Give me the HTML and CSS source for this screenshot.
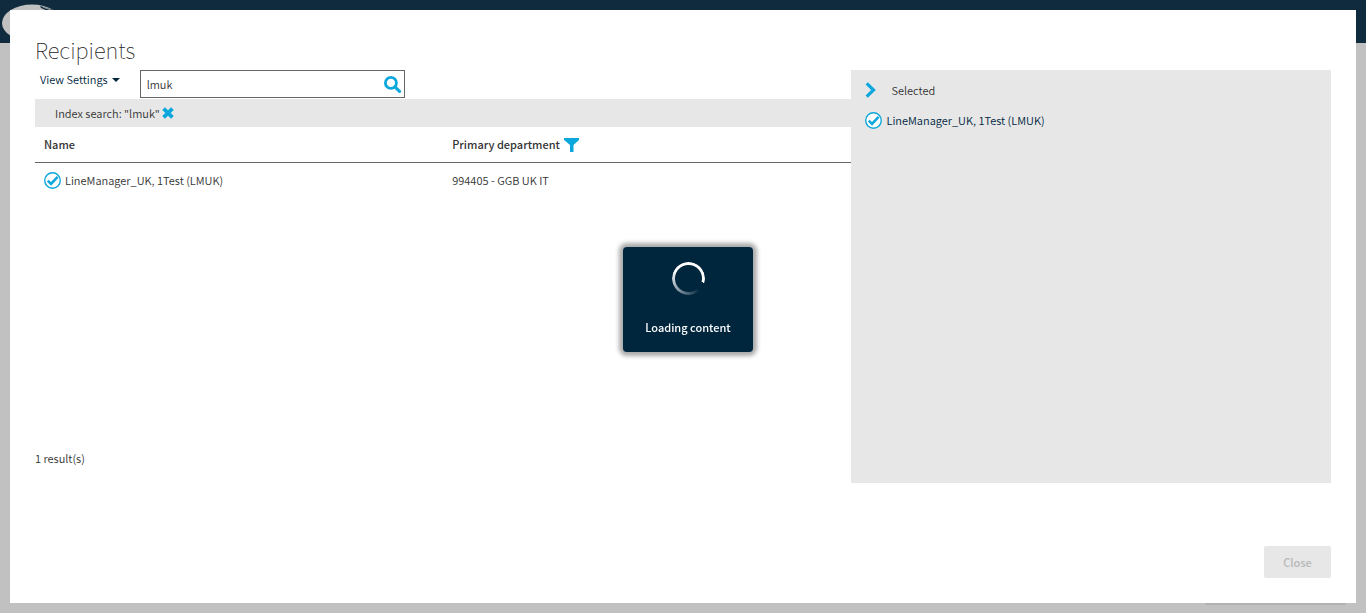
FILE: index.html
```html
<!DOCTYPE html>
<html lang="en">
<head>
<meta charset="utf-8">
<meta name="viewport" content="width=device-width, initial-scale=1">
<title>Recipients</title>
<link rel="stylesheet" href="styles.css">
</head>
<body>
<svg class="defs" aria-hidden="true">
  <symbol id="check" viewBox="0 0 16 16">
    <circle cx="8" cy="8" r="7.3" fill="#fff" stroke="#0ca7dc" stroke-width="1.3"/>
    <path d="M3.6 8.2 6.6 11.2 12.8 4.6" fill="none" stroke="#0ca7dc" stroke-width="2.4"/>
  </symbol>
</svg>
<div class="page">
  <header class="page-header">
    <svg class="logo" viewBox="0 0 60 38" aria-hidden="true">
      <ellipse cx="32" cy="19" rx="30" ry="18.500" fill="#c1c1c1"/>
      <path d="M40 2 60 8V12L41 4Z" fill="#0f2b3d"/>
      <path d="M43 3 58 9" stroke="#8c99a1" stroke-width="1"/>
    </svg>
  </header>
  <div class="page-bottom"></div>
</div>

<main class="dialog" role="dialog" aria-labelledby="title">
  <h1 class="title" id="title">Recipients</h1>
  <div class="content">
    <section class="results">
      <div class="toolbar">
        <button class="view-settings" type="button">View Settings
          <svg class="caret" viewBox="0 0 8 4" aria-hidden="true"><path d="M0 0H8L4 4Z" fill="currentColor"/></svg>
        </button>
        <form class="search">
          <input class="search-input" type="text" value="lmuk" aria-label="Search">
          <button class="icon-button" type="button" aria-label="Run search">
            <svg class="icon-search" viewBox="0 0 16 16" aria-hidden="true"><circle cx="6.500" cy="6.500" r="5.200" fill="none" stroke="#0ca7dc" stroke-width="2.600"/><path d="M10.300 10.300 14.600 14.400" stroke="#0ca7dc" stroke-width="3" stroke-linecap="round"/></svg>
          </button>
        </form>
      </div>
      <div class="filter-bar">
        <span>Index search: "lmuk"</span>
        <button class="icon-button" type="button" aria-label="Remove filter">
          <svg class="icon-remove" viewBox="0 0 12 12" aria-hidden="true"><path d="M1.600 1.600 10.400 10.400M10.400 1.600 1.600 10.400" stroke="#0ca7dc" stroke-width="3.800"/></svg>
        </button>
      </div>
      <table class="grid">
        <thead>
          <tr>
            <th scope="col">Name</th>
            <th scope="col">
              <div class="cell">Primary department
                <button class="icon-button" type="button" aria-label="Filter by primary department">
                  <svg class="icon-funnel" viewBox="0 0 15 14" aria-hidden="true"><path d="M0 0H15V2L9.500 7V14H6V7L0 2Z" fill="#0ca7dc"/></svg>
                </button>
              </div>
            </th>
          </tr>
        </thead>
        <tbody>
          <tr>
            <td><div class="cell"><svg class="icon-check" aria-hidden="true"><use href="#check"/></svg>LineManager_UK, 1Test (LMUK)</div></td>
            <td>994405 - GGB UK IT</td>
          </tr>
        </tbody>
      </table>
      <p class="count">1 result(s)</p>
    </section>
    <aside class="selected">
      <button class="selected-head" type="button">
        <svg class="icon-chevron" viewBox="0 0 10 16" aria-hidden="true"><path d="M1.200 1.400 8 8 1.200 14.600" fill="none" stroke="#0ca7dc" stroke-width="3.200"/></svg>
        Selected
      </button>
      <a class="selected-item" href="#"><svg class="icon-check" aria-hidden="true"><use href="#check"/></svg>LineManager_UK, 1Test (LMUK)</a>
    </aside>
  </div>
  <footer class="actions">
    <button class="close" type="button" disabled>Close</button>
  </footer>
</main>

<div class="loading-layer">
  <div class="loading" role="status">
    <div class="spinner"></div>
    <span>Loading content</span>
  </div>
</div>
</body>
</html>
```

FILE: styles.css
```css
* {
  box-sizing: border-box;
}

body {
  margin: 0;
  font-family: "Source Sans Pro", "Noto Sans CJK SC", "Noto Sans", sans-serif;
  font-size: 11px;
  font-weight: 350;
  line-height: 15px;
  color: #333;
}

button,
input {
  margin: 0;
  padding: 0;
  border: 0;
  background: none;
  font: inherit;
  color: inherit;
}

svg {
  display: block;
  flex: none;
}

.defs {
  position: absolute;
  width: 0;
  height: 0;
}

.page {
  display: flex;
  flex-direction: column;
  justify-content: space-between;
  min-height: 100vh;
  padding-bottom: 8px;
  background: #c1c1c1;
}

.page-header {
  height: 43px;
  padding-top: 4px;
  background: #0f2b3d;
}

.logo {
  width: 60px;
  height: 38px;
}

.page-bottom {
  align-self: flex-end;
  width: 141px;
  height: 8px;
  margin-right: 20px;
  border-radius: 2px;
  background: #b1b1b1;
}

.dialog {
  position: fixed;
  inset: 10px;
  display: flex;
  flex-direction: column;
  padding: 25px;
  background: #fff;
}

.title {
  margin: 0;
  padding-bottom: 7px;
  font-size: 22px;
  font-weight: 100;
  line-height: 28px;
  color: #222;
}

.content {
  flex: 1;
  display: grid;
  grid-template-columns: 63fr 37fr;
}

.results {
  display: flex;
  flex-direction: column;
}

.toolbar {
  display: flex;
  gap: 20px;
  padding: 0 0 1px 5px;
}

.view-settings {
  display: flex;
  align-items: center;
  align-self: flex-start;
  gap: 4px;
  padding-top: 2px;
  color: #00263e;
}

.caret {
  width: 8px;
  height: 4px;
}

.search {
  display: flex;
  align-items: center;
  width: 265px;
  height: 28px;
  padding: 0 3px 0 6px;
  border: 1px solid #666;
}

.search-input {
  flex: 1;
  min-width: 0;
  outline: 0;
}

.icon-search {
  width: 17px;
  height: 17px;
}

.filter-bar {
  display: flex;
  align-items: center;
  gap: 2px;
  height: 28px;
  padding-left: 20px;
  background: #e7e7e7;
}

.icon-remove {
  width: 12px;
  height: 12px;
}

.grid {
  width: 100%;
  table-layout: fixed;
  border-collapse: separate;
  border-spacing: 0;
  text-align: left;
}

.grid th {
  height: 36px;
  padding: 0 9px;
  border-bottom: 1px solid #666;
  font-weight: 500;
}

.grid td {
  height: 34px;
  padding: 0 9px;
}

.cell {
  display: flex;
  align-items: center;
  gap: 4px;
}

.icon-funnel {
  width: 15px;
  height: 14px;
}

.icon-check {
  width: 17px;
  height: 17px;
}

.count {
  margin: auto 0 17px;
}

.selected {
  padding: 12px 14px;
  background: #e7e7e7;
}

.selected-head {
  display: flex;
  align-items: center;
  gap: 15px;
}

.icon-chevron {
  width: 11px;
  height: 16px;
}

.selected-item {
  display: flex;
  align-items: center;
  gap: 4px;
  margin-top: 14px;
  color: #00263e;
  text-decoration: none;
}

.actions {
  display: flex;
  justify-content: flex-end;
  padding-top: 63px;
}

.close {
  width: 67px;
  height: 32px;
  border-radius: 2px;
  background: #e7e7e7;
  font-weight: 500;
  color: #b8b8b8;
}

.loading-layer {
  position: fixed;
  inset: 0 0 14px 10px;
  display: grid;
  place-items: center;
  pointer-events: none;
}

.loading {
  display: flex;
  flex-direction: column;
  align-items: center;
  gap: 25px;
  width: 130px;
  padding: 15px 0 17px;
  border-radius: 4px;
  background: #00263e;
  box-shadow: 0 0 4px 4px #aaa;
  font-weight: 500;
  color: #fff;
}

.spinner {
  width: 33px;
  height: 33px;
  border-radius: 50%;
  background: conic-gradient(#fff 0 105deg, transparent 105deg 135deg, #fff 300deg);
  mask: radial-gradient(circle, transparent 13px, #000 14px);
}
```
